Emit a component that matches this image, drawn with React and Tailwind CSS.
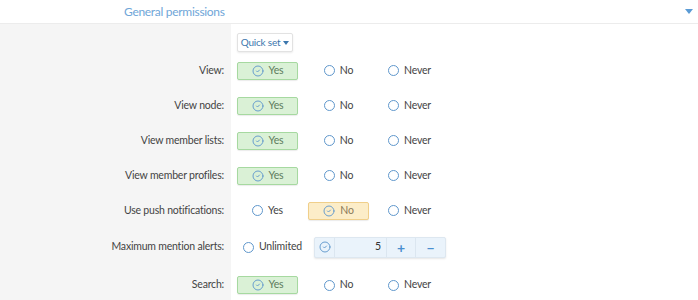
import { CircleCheck } from "lucide-react";

const rows = [
  { label: "View:", value: "yes" },
  { label: "View node:", value: "yes" },
  { label: "View member lists:", value: "yes" },
  { label: "View member profiles:", value: "yes" },
  { label: "Use push notifications:", value: "no" },
];

function Radio() {
  return <span className="inline-block h-[11px] w-[11px] shrink-0 rounded-full border border-[#5f97cc] bg-white" />;
}

function Option({ text, selected, tone }) {
  const boxTone =
    tone === "no"
      ? "border-[#f0cf8a] bg-[#fcedc8] text-[#8a7a5a]"
      : "border-[#a6d9a0] bg-[#daf1d6] text-[#5d7d5d]";
  if (selected) {
    return (
      <span className={`flex h-[18px] w-[61px] items-center justify-center gap-[5px] rounded-[2px] border shadow-[0_1px_1px_rgba(0,0,0,0.08)] ${boxTone}`}>
        <CircleCheck size={12} strokeWidth={1.9} className="text-[#6199cc]" />
        <span>{text}</span>
      </span>
    );
  }
  return (
    <span className="flex h-[18px] w-[61px] items-center justify-center gap-[5px] text-[#444]">
      <Radio />
      <span>{text}</span>
    </span>
  );
}

function Label({ children, h }) {
  return (
    <div className={`flex items-center justify-end bg-[#f5f5f5] pr-[7px] text-[#444] ${h}`}>{children}</div>
  );
}

function Choice({ value }) {
  return (
    <div className="flex items-center gap-[10px] pl-[6px]">
      <Option text="Yes" selected={value === "yes"} tone="yes" />
      <Option text="No" selected={value === "no"} tone="no" />
      <Option text="Never" selected={value === "never"} tone="yes" />
    </div>
  );
}

export default function App() {
  return (
    <div className="h-[300px] w-[698px] overflow-hidden bg-white text-[10.5px] tracking-[-0.2px]" style={{ fontFamily: "Lato, sans-serif" }}>
      <div className="flex h-[24px] items-center justify-between border-b border-[#ececec] pl-[124px] pr-[5px]">
        <span className="text-[12px] tracking-[-0.3px] text-[#6fa6d8]">General permissions</span>
        <span className="h-0 w-0 border-x-[4px] border-t-[5px] border-x-transparent border-t-[#5a9bd5]" />
      </div>
      <div className="grid grid-cols-[231px_1fr]">
        <div className="h-[29px] bg-[#f5f5f5]" />
        <div className="pl-[6px] pt-[9px]">
          <button className="flex h-[19px] w-[56px] items-center justify-center gap-[3px] rounded-[2px] border border-[#e2e2e2] bg-white text-[10px] text-[#3c77ad] shadow-[0_1px_2px_rgba(0,0,0,0.08)]">
            Quick set
            <span className="h-0 w-0 border-x-[3px] border-t-[4px] border-x-transparent border-t-[#3c77ad]" />
          </button>
        </div>

        {rows.map((r) => (
          <div key={r.label} className="contents">
            <Label h="h-[35px]">{r.label}</Label>
            <Choice value={r.value} />
          </div>
        ))}

        <Label h="h-[38px]">Maximum mention alerts:</Label>
        <div className="flex items-center pl-[6px]">
          <span className="flex h-[18px] w-[68px] items-center gap-[5px] pl-[6px] text-[#444]">
            <Radio />
            <span>Unlimited</span>
          </span>
          <div className="ml-[9px] flex h-[21px] items-stretch rounded-[2px] border border-[#dde7f0] bg-[#eaf3fb] shadow-[0_1px_2px_rgba(0,0,0,0.1)]">
            <span className="flex w-[20px] items-center justify-center border-r border-[#dbe6f0]">
              <CircleCheck size={12} strokeWidth={1.9} className="text-[#6199cc]" />
            </span>
            <span className="flex w-[52px] items-center justify-end border-r border-[#dbe6f0] pr-[5px] text-[#333]">5</span>
            <span className="flex w-[29px] items-center justify-center border-r border-[#dbe6f0] text-[14px] font-bold text-[#4a8fd0]">+</span>
            <span className="flex w-[29px] items-center justify-center text-[14px] font-bold text-[#4a8fd0]">−</span>
          </div>
        </div>

        <Label h="h-[38px]">Search:</Label>
        <Choice value="yes" />
      </div>
    </div>
  );
}
